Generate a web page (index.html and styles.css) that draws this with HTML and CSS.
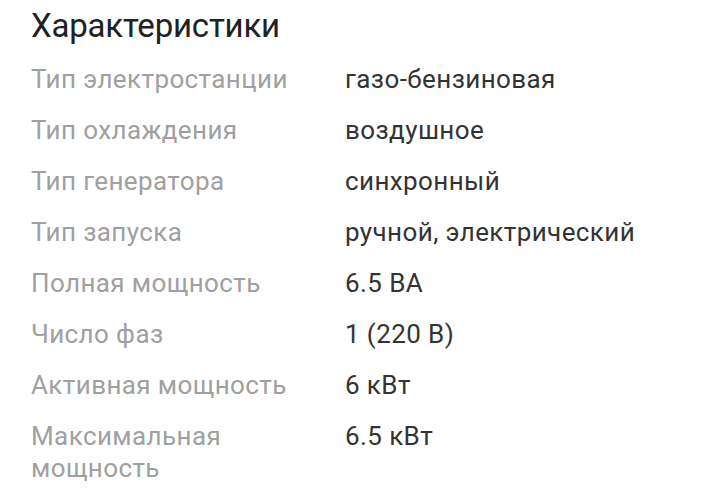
FILE: index.html
```html
<!DOCTYPE html>
<html lang="ru">
<head>
<meta charset="utf-8">
<link rel="stylesheet" href="styles.css">
</head>
<body>
<section class="specs">
  <h2 class="specs-title">Характеристики</h2>
  <dl class="specs-list">
    <div class="spec-row"><dt class="spec-label">Тип электростанции</dt><dd class="spec-value">газо-бензиновая</dd></div>
    <div class="spec-row"><dt class="spec-label">Тип охлаждения</dt><dd class="spec-value">воздушное</dd></div>
    <div class="spec-row"><dt class="spec-label">Тип генератора</dt><dd class="spec-value">синхронный</dd></div>
    <div class="spec-row"><dt class="spec-label">Тип запуска</dt><dd class="spec-value">ручной, электрический</dd></div>
    <div class="spec-row"><dt class="spec-label">Полная мощность</dt><dd class="spec-value">6.5 ВА</dd></div>
    <div class="spec-row"><dt class="spec-label">Число фаз</dt><dd class="spec-value">1 (220 В)</dd></div>
    <div class="spec-row"><dt class="spec-label">Активная мощность</dt><dd class="spec-value">6 кВт</dd></div>
    <div class="spec-row"><dt class="spec-label">Максимальная мощность</dt><dd class="spec-value">6.5 кВт</dd></div>
  </dl>
</section>
</body>
</html>
```

FILE: styles.css
```css
html, body {
  margin: 0;
  padding: 0;
  background: #ffffff;
}
body {
  font-family: Roboto, "Noto Sans", sans-serif;
}
.specs {
  padding: 6px 31px 0 31px;
}
.specs-title {
  margin: 0 0 17px 0;
  font-size: 33px;
  line-height: 40px;
  font-weight: 400;
  letter-spacing: -0.2px;
  color: #212121;
}
.specs-list {
  margin: 0;
  display: flex;
  flex-direction: column;
  gap: 19px;
}
.spec-row {
  display: grid;
  grid-template-columns: 314px 1fr;
}
.spec-label, .spec-value {
  margin: 0;
  font-size: 26px;
  line-height: 32px;
  letter-spacing: 0.4px;
}
.spec-label {
  color: #a0a0a0;
  padding-right: 20px;
}
.spec-value {
  color: #333333;
}
```
